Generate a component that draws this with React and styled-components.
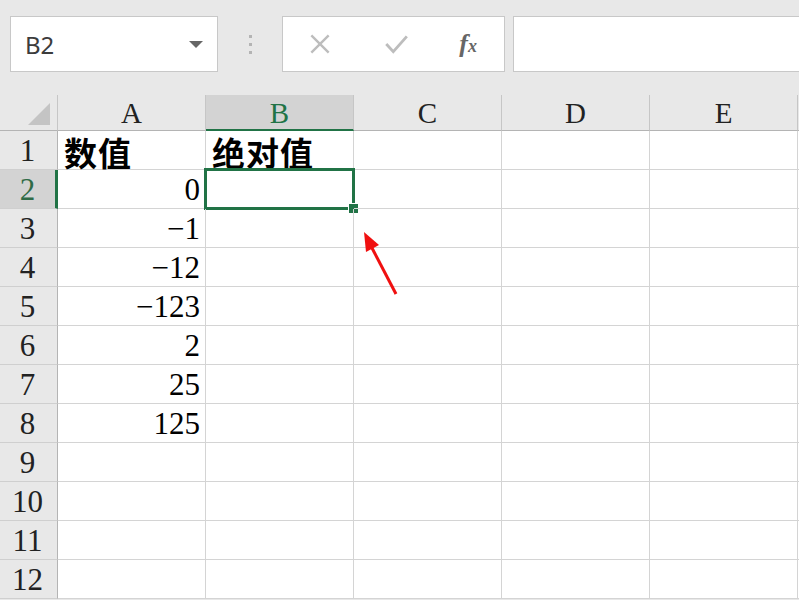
import React from "react";
import styled, { createGlobalStyle } from "styled-components";

const GlobalStyle = createGlobalStyle`
  html, body {
    margin: 0;
    padding: 0;
    background: #e8e8e8;
    overflow: hidden;
  }
  * { box-sizing: border-box; }
`;

const columns = ["A", "B", "C", "D", "E"];
const values = {
  1: { A: "数值", B: "绝对值" },
  2: { A: "0" },
  3: { A: "−1" },
  4: { A: "−12" },
  5: { A: "−123" },
  6: { A: "2" },
  7: { A: "25" },
  8: { A: "125" },
};
const rows = Array.from({ length: 12 }, (_, i) => i + 1);

function App() {
  return (
    <Page>
      <GlobalStyle />
      <Toolbar>
        <NameBox>
          <NameText>B2</NameText>
          <Caret />
        </NameBox>
        <Grip>
          <Dot />
          <Dot />
          <Dot />
        </Grip>
        <FormulaButtons>
          <ToolIcon viewBox="0 0 24 24">
            <path d="M4 4 L20 20 M20 4 L4 20" stroke="#bdbdbd" strokeWidth="2.2" fill="none" />
          </ToolIcon>
          <ToolIcon viewBox="0 0 24 24">
            <path d="M3 12 L9.5 19 L22 5" stroke="#bdbdbd" strokeWidth="2.6" fill="none" />
          </ToolIcon>
          <Fx>
            f<sub>x</sub>
          </Fx>
        </FormulaButtons>
        <FormulaInput />
      </Toolbar>

      <Sheet>
        <Corner>
          <CornerMark viewBox="0 0 22 22">
            <polygon points="22,0 22,22 0,22" fill="#c4c4c4" />
          </CornerMark>
        </Corner>
        {columns.map((c) => (
          <ColHeader key={c} $active={c === "B"}>
            {c}
          </ColHeader>
        ))}
        <ColHeader />

        {rows.map((r) => (
          <React.Fragment key={r}>
            <RowHeader $active={r === 2}>{r}</RowHeader>
            {columns.map((c) => {
              const v = values[r] && values[r][c];
              const isText = r === 1;
              return (
                <Cell key={c} $text={isText}>
                  {v}
                  {r === 2 && c === "B" && (
                    <Selection>
                      <Handle />
                    </Selection>
                  )}
                </Cell>
              );
            })}
            <Cell />
          </React.Fragment>
        ))}

        <Arrow viewBox="0 0 50 75">
          <line x1="17" y1="23" x2="41" y2="69" stroke="#f01010" strokeWidth="3" />
          <polygon points="9,7 24,20 11,27" fill="#f01010" />
        </Arrow>
      </Sheet>
    </Page>
  );
}

export default App;

const Page = styled.div`
  width: 799px;
  height: 600px;
  overflow: hidden;
  background: #e8e8e8;
`;

const Toolbar = styled.div`
  height: 95px;
  display: flex;
  align-items: flex-start;
  padding: 16px 0 0 10px;
`;

const NameBox = styled.div`
  width: 208px;
  height: 56px;
  background: #fff;
  border: 1px solid #c8c8c8;
  display: flex;
  align-items: center;
  justify-content: space-between;
  padding: 0 14px 0 14px;
`;

const NameText = styled.span`
  font-family: "Noto Sans", "Liberation Sans", sans-serif;
  font-size: 24px;
  color: #3c3c3c;
`;

const Caret = styled.span`
  width: 0;
  height: 0;
  border-left: 7px solid transparent;
  border-right: 7px solid transparent;
  border-top: 7px solid #666;
`;

const Grip = styled.div`
  width: 64px;
  height: 56px;
  display: flex;
  flex-direction: column;
  align-items: center;
  justify-content: center;
  gap: 5px;
`;

const Dot = styled.span`
  width: 3px;
  height: 3px;
  background: #b4b4b4;
`;

const FormulaButtons = styled.div`
  width: 223px;
  height: 56px;
  background: #fff;
  border: 1px solid #c8c8c8;
  display: flex;
  align-items: center;
  justify-content: space-between;
  padding: 0 24px 0 24px;
`;

const ToolIcon = styled.svg`
  width: 26px;
  height: 26px;
`;

const Fx = styled.span`
  font-family: "Liberation Serif", serif;
  font-style: italic;
  font-weight: bold;
  font-size: 26px;
  color: #666;
  margin-right: 3px;
  sub {
    font-size: 18px;
    vertical-align: 0;
  }
`;

const FormulaInput = styled.div`
  flex: 1;
  height: 56px;
  margin-left: 8px;
  margin-right: -4px;
  background: #fff;
  border: 1px solid #c8c8c8;
`;

const Sheet = styled.div`
  position: relative;
  display: grid;
  grid-template-columns: 58px repeat(5, 148px) 1fr;
  grid-template-rows: 36px repeat(12, 39px);
  background: #fff;
`;

const Corner = styled.div`
  background: #e8e8e8;
  border-right: 1px solid #c6c6c6;
  border-bottom: 1px solid #b4b4b4;
  display: flex;
  align-items: flex-end;
  justify-content: flex-end;
  padding: 0 7px 5px 0;
`;

const CornerMark = styled.svg`
  width: 22px;
  height: 22px;
`;

const ColHeader = styled.div`
  background: ${(p) => (p.$active ? "#d3d3d3" : "#e8e8e8")};
  border-right: 1px solid #c6c6c6;
  border-bottom: ${(p) => (p.$active ? "2px solid #217346" : "1px solid #b4b4b4")};
  color: ${(p) => (p.$active ? "#217346" : "#222")};
  font-family: "Liberation Serif", serif;
  font-size: 29px;
  display: flex;
  align-items: flex-end;
  justify-content: center;
  line-height: 1;
  padding-bottom: ${(p) => (p.$active ? "1px" : "2px")};
`;

const RowHeader = styled.div`
  background: ${(p) => (p.$active ? "#d3d3d3" : "#e8e8e8")};
  border-right: ${(p) => (p.$active ? "3px solid #217346" : "1px solid #b4b4b4")};
  border-bottom: 1px solid #cfcfcf;
  color: ${(p) => (p.$active ? "#2f6b47" : "#222")};
  font-family: "Liberation Serif", serif;
  font-size: 31px;
  line-height: 1;
  display: flex;
  align-items: flex-end;
  justify-content: center;
  padding: 0 ${(p) => (p.$active ? "0" : "2px")} 3px 0;
`;

const Cell = styled.div`
  position: relative;
  border-right: 1px solid #d4d4d4;
  border-bottom: 1px solid #d4d4d4;
  display: flex;
  align-items: flex-end;
  justify-content: ${(p) => (p.$text ? "flex-start" : "flex-end")};
  line-height: 1;
  color: #000;
  font-family: ${(p) =>
    p.$text
      ? '"Noto Sans CJK SC", sans-serif'
      : '"Liberation Serif", serif'};
  font-size: ${(p) => (p.$text ? "33px" : "31px")};
  font-weight: ${(p) => (p.$text ? "bold" : "normal")};
  letter-spacing: ${(p) => (p.$text ? "1px" : "0")};
  padding: ${(p) => (p.$text ? "0 0 0 6px" : "0 5px 3px 0")};
  white-space: nowrap;
`;

const Selection = styled.div`
  position: absolute;
  top: -2px;
  left: -2px;
  right: -2px;
  bottom: -2px;
  border: 3px solid #217346;
  pointer-events: none;
`;

const Handle = styled.div`
  position: absolute;
  right: -7px;
  bottom: -7px;
  width: 11px;
  height: 11px;
  background: #217346;
  border: 1px solid #fff;
`;

const Arrow = styled.svg`
  position: absolute;
  left: 355px;
  top: 130px;
  width: 50px;
  height: 75px;
`;
